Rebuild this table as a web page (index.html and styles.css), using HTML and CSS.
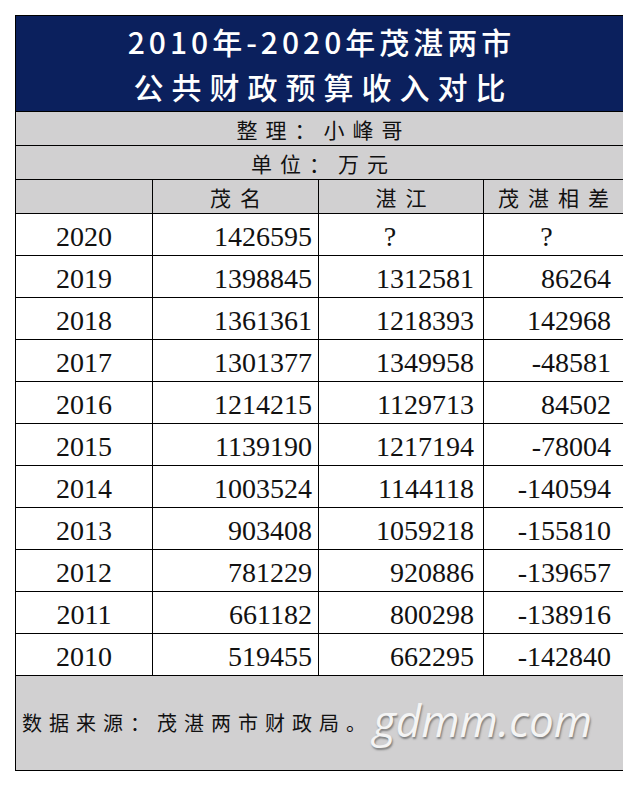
FILE: index.html
```html
<!DOCTYPE html>
<html lang="zh">
<head>
<meta charset="utf-8">
<title>茂湛两市公共财政预算收入对比</title>
<link rel="stylesheet" href="styles.css">
</head>
<body>
<div class="sheet">
  <div class="title">
    <div class="title-line first">2010年-2020年茂湛两市</div>
    <div class="title-line second">公共财政预算收入对比</div>
  </div>
  <div class="band">整理：小峰哥</div>
  <div class="band">单位：万元</div>
  <div class="head"></div>
  <div class="head">茂名</div>
  <div class="head">湛江</div>
  <div class="head">茂湛相差</div>

  <div class="cell year">2020</div><div class="cell num c2">1426595</div><div class="cell q c3">?</div><div class="cell q c4">?</div>
  <div class="cell year">2019</div><div class="cell num c2">1398845</div><div class="cell num c3">1312581</div><div class="cell num c4">86264</div>
  <div class="cell year">2018</div><div class="cell num c2">1361361</div><div class="cell num c3">1218393</div><div class="cell num c4">142968</div>
  <div class="cell year">2017</div><div class="cell num c2">1301377</div><div class="cell num c3">1349958</div><div class="cell num c4">-48581</div>
  <div class="cell year">2016</div><div class="cell num c2">1214215</div><div class="cell num c3">1129713</div><div class="cell num c4">84502</div>
  <div class="cell year">2015</div><div class="cell num c2">1139190</div><div class="cell num c3">1217194</div><div class="cell num c4">-78004</div>
  <div class="cell year">2014</div><div class="cell num c2">1003524</div><div class="cell num c3">1144118</div><div class="cell num c4">-140594</div>
  <div class="cell year">2013</div><div class="cell num c2">903408</div><div class="cell num c3">1059218</div><div class="cell num c4">-155810</div>
  <div class="cell year">2012</div><div class="cell num c2">781229</div><div class="cell num c3">920886</div><div class="cell num c4">-139657</div>
  <div class="cell year">2011</div><div class="cell num c2">661182</div><div class="cell num c3">800298</div><div class="cell num c4">-138916</div>
  <div class="cell year">2010</div><div class="cell num c2">519455</div><div class="cell num c3">662295</div><div class="cell num c4">-142840</div>

  <div class="footer">
    <span class="source">数据来源：茂湛两市财政局。</span>
    <span class="watermark">gdmm.com</span>
  </div>
</div>
</body>
</html>
```

FILE: styles.css
```css
html, body {
  margin: 0;
  padding: 0;
  background: #ffffff;
}

body {
  padding: 15px 0 0 15px;
}

.sheet {
  width: 608px;
  box-sizing: border-box;
  display: grid;
  grid-template-columns: 136px 165px 164px 139px;
  grid-template-rows: 95px 33px 33px 33px repeat(11, 41px) 94px;
  gap: 1px;
  padding: 1px;
  background: #000000;
}

.title {
  grid-column: 1 / -1;
  background: #0b205d;
  color: #ffffff;
  display: flex;
  flex-direction: column;
  align-items: center;
  justify-content: center;
  font-family: "Noto Sans CJK SC", sans-serif;
  font-weight: 500;
  font-size: 30px;
  line-height: 45px;
}

.title-line.first {
  letter-spacing: 4px;
  padding-left: 4px;
}

.title-line.second {
  letter-spacing: 8px;
  padding-left: 8px;
}

.band {
  grid-column: 1 / -1;
  background: #d1d0d1;
  display: flex;
  align-items: center;
  justify-content: center;
  font-family: "Noto Sans CJK SC", sans-serif;
  font-size: 21px;
  color: #111111;
  letter-spacing: 8px;
  padding-left: 8px;
}

.head {
  background: #d1d0d1;
  display: flex;
  align-items: center;
  justify-content: center;
  font-family: "Noto Sans CJK SC", sans-serif;
  font-size: 21px;
  color: #111111;
  letter-spacing: 9px;
  padding-left: 9px;
}

.cell {
  background: #ffffff;
  display: flex;
  align-items: center;
  font-family: "Liberation Serif", "Times New Roman", serif;
  font-size: 28px;
  color: #111111;
  padding-top: 4px;
  box-sizing: border-box;
}

.year {
  justify-content: center;
}

.num {
  justify-content: flex-end;
}

.num.c2 { padding-right: 6px; }
.num.c3 { padding-right: 9px; }
.num.c4 { padding-right: 12px; }

.q {
  justify-content: center;
}

.q.c3 { padding-right: 22px; }
.q.c4 { padding-right: 14px; }

.footer {
  grid-column: 1 / -1;
  background: #d1d0d1;
  display: flex;
  align-items: center;
  padding-left: 6px;
  padding-bottom: 2px;
}

.source {
  font-family: "Noto Sans CJK SC", sans-serif;
  font-size: 20px;
  color: #111111;
  letter-spacing: 7px;
}

.watermark {
  margin-left: 0;
  font-family: "Open Sans", sans-serif;
  font-style: italic;
  font-size: 44px;
  color: #f4f4f4;
  text-shadow: 1px 2px 2px #7d7d7d;
  margin-top: -4px;
}
```
